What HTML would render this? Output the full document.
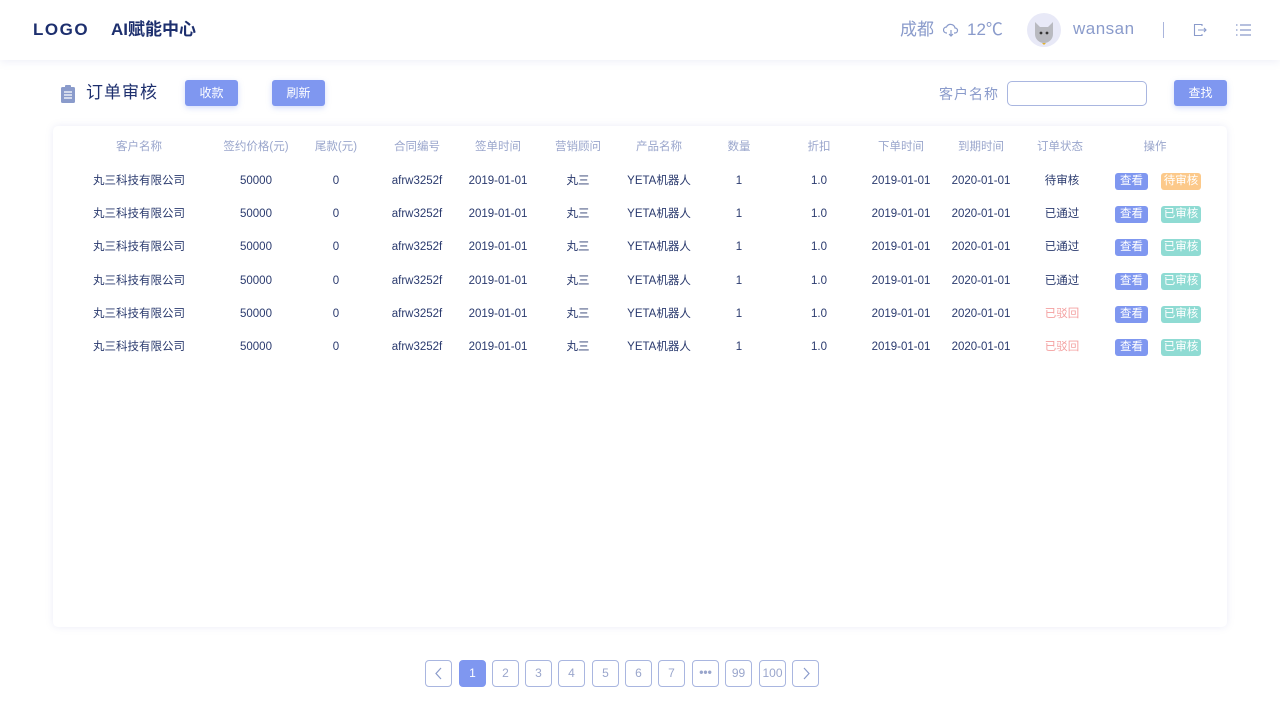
<!DOCTYPE html>
<html><head><meta charset="utf-8"><style>
*{margin:0;padding:0;box-sizing:border-box}
body{width:1280px;height:720px;background:#fff;font-family:"Liberation Sans","Noto Sans CJK SC",sans-serif;position:relative;overflow:hidden}
.hdr{position:absolute;left:0;top:0;width:1280px;height:60px;background:#fff;box-shadow:0 2px 8px rgba(120,130,200,.12)}
.a{position:absolute;white-space:nowrap}
.btn{position:absolute;background:#7f97f0;color:#fff;font-size:12px;border-radius:3px;text-align:center;line-height:26px;height:26px;width:53px;box-shadow:0 2px 6px rgba(127,151,240,.35)}
.card{position:absolute;left:53px;top:126px;width:1174px;height:501px;background:#fff;border-radius:5px;box-shadow:0 0 8px rgba(120,130,200,.15)}
.r{position:absolute;left:0;width:1280px;height:20px;font-size:11.5px;color:#2a3a6e}
.r span{position:absolute;width:120px;margin-left:-60px;text-align:center;line-height:20px}
.h{color:#9aa6cc}
.tag{position:absolute;top:2px;height:17px;line-height:17px;font-size:11.5px;color:#fff;border-radius:3px;text-align:center}
.pg{position:absolute;top:660px;width:27px;height:27px;border:1px solid #a9b6e0;border-radius:4px;color:#9aa6cc;font-size:12px;text-align:center;line-height:25px;background:#fff}
</style></head><body>
<div class="hdr"></div>
<div class="a" style="left:33px;top:20px;line-height:20px;font-size:17px;font-weight:bold;color:#1d2f6e;letter-spacing:1.5px">LOGO</div>
<div class="a" style="left:111px;top:20px;line-height:20px;font-size:17px;font-weight:bold;color:#1d2f6e">AI赋能中心</div>
<div class="a" style="left:900px;top:20px;line-height:20px;font-size:17px;color:#8a9bcb">成都</div>
<svg class="a" style="left:943px;top:23px" width="16" height="14" viewBox="0 0 16 14"><path d="M4 10H3.5a3 3 0 0 1 0-6 4.5 4.5 0 0 1 8.5 1 2.5 2.5 0 0 1 0 5H11M8 7v6M6 11l2 2 2-2" fill="none" stroke="#8a9bcb" stroke-width="1.2"/></svg>
<div class="a" style="left:967px;top:20px;line-height:20px;font-size:17px;color:#8a9bcb">12℃</div>
<div class="a" style="left:1027px;top:13px;width:34px;height:34px;border-radius:50%;background:#e8e9f7"></div>
<svg class="a" style="left:1031px;top:18px" width="26" height="28" viewBox="0 0 26 28"><path d="M4 4l5 5h8l5-5v12a9 9 0 0 1-18 0z" fill="#b9bac0"/><circle cx="10" cy="15" r="1.4" fill="#333"/><circle cx="16" cy="15" r="1.4" fill="#333"/><path d="M11 25h4l-2 2z" fill="#e0b030"/></svg>
<div class="a" style="left:1073px;top:19px;line-height:20px;font-size:17px;color:#8a9bcb;letter-spacing:.5px">wansan</div>
<div class="a" style="left:1163px;top:22px;width:1px;height:16px;background:#aab5dc"></div>
<svg class="a" style="left:1193px;top:23px" width="14" height="14" viewBox="0 0 14 14"><path d="M9 3V1.5H1.5v11H9V11M5 7h8M11 5l2 2-2 2" fill="none" stroke="#8a9bcb" stroke-width="1.1"/></svg>
<svg class="a" style="left:1236px;top:23px" width="15" height="14" viewBox="0 0 15 14"><path d="M0 2h1.5M0 7h1.5M0 12h1.5M4 2h11M4 7h11M4 12h11" stroke="#8a9bcb" stroke-width="1.2"/></svg>

<svg class="a" style="left:60px;top:85px" width="16" height="18" viewBox="0 0 16 18"><rect x="1" y="2" width="14" height="16" rx="1.5" fill="#8a9bcb"/><rect x="5" y="0" width="6" height="3" rx="1" fill="#8a9bcb"/><path d="M4 7h8M4 10h8M4 13h8" stroke="#fff" stroke-width="1.2"/></svg>
<div class="a" style="left:86px;top:83px;line-height:20px;font-size:17px;color:#1d2f6e;letter-spacing:1px">订单审核</div>
<div class="btn" style="left:185px;top:80px">收款</div>
<div class="btn" style="left:272px;top:80px">刷新</div>
<div class="a" style="left:939px;top:84px;line-height:20px;font-size:14px;color:#8a9bcb;letter-spacing:1px">客户名称</div>
<div class="a" style="left:1007px;top:81px;width:140px;height:25px;border:1px solid #a9b6e0;border-radius:5px;background:#fff"></div>
<div class="btn" style="left:1174px;top:80px">查找</div>

<div class="card"></div>
<div class="r h" style="top:137px"><span style="left:139px">客户名称</span><span style="left:256px">签约价格(元)</span><span style="left:336px">尾款(元)</span><span style="left:417px">合同编号</span><span style="left:498px">签单时间</span><span style="left:578px">营销顾问</span><span style="left:659px">产品名称</span><span style="left:739px">数量</span><span style="left:819px">折扣</span><span style="left:901px">下单时间</span><span style="left:981px">到期时间</span><span style="left:1060px">订单状态</span><span style="left:1155px">操作</span></div>

<div class="r" style="top:171px"><span style="left:139px">丸三科技有限公司</span><span style="left:256px">50000</span><span style="left:336px">0</span><span style="left:417px">afrw3252f</span><span style="left:498px">2019-01-01</span><span style="left:578px">丸三</span><span style="left:659px">YETA机器人</span><span style="left:739px">1</span><span style="left:819px">1.0</span><span style="left:901px">2019-01-01</span><span style="left:981px">2020-01-01</span><span style="left:1062px">待审核</span><div class="tag" style="left:1115px;width:33px;background:#7f97f0">查看</div><div class="tag" style="left:1161px;width:40px;background:#fcc98a">待审核</div></div>
<div class="r" style="top:204px"><span style="left:139px">丸三科技有限公司</span><span style="left:256px">50000</span><span style="left:336px">0</span><span style="left:417px">afrw3252f</span><span style="left:498px">2019-01-01</span><span style="left:578px">丸三</span><span style="left:659px">YETA机器人</span><span style="left:739px">1</span><span style="left:819px">1.0</span><span style="left:901px">2019-01-01</span><span style="left:981px">2020-01-01</span><span style="left:1062px">已通过</span><div class="tag" style="left:1115px;width:33px;background:#7f97f0">查看</div><div class="tag" style="left:1161px;width:40px;background:#8fdbd3">已审核</div></div>
<div class="r" style="top:237px"><span style="left:139px">丸三科技有限公司</span><span style="left:256px">50000</span><span style="left:336px">0</span><span style="left:417px">afrw3252f</span><span style="left:498px">2019-01-01</span><span style="left:578px">丸三</span><span style="left:659px">YETA机器人</span><span style="left:739px">1</span><span style="left:819px">1.0</span><span style="left:901px">2019-01-01</span><span style="left:981px">2020-01-01</span><span style="left:1062px">已通过</span><div class="tag" style="left:1115px;width:33px;background:#7f97f0">查看</div><div class="tag" style="left:1161px;width:40px;background:#8fdbd3">已审核</div></div>
<div class="r" style="top:271px"><span style="left:139px">丸三科技有限公司</span><span style="left:256px">50000</span><span style="left:336px">0</span><span style="left:417px">afrw3252f</span><span style="left:498px">2019-01-01</span><span style="left:578px">丸三</span><span style="left:659px">YETA机器人</span><span style="left:739px">1</span><span style="left:819px">1.0</span><span style="left:901px">2019-01-01</span><span style="left:981px">2020-01-01</span><span style="left:1062px">已通过</span><div class="tag" style="left:1115px;width:33px;background:#7f97f0">查看</div><div class="tag" style="left:1161px;width:40px;background:#8fdbd3">已审核</div></div>
<div class="r" style="top:304px"><span style="left:139px">丸三科技有限公司</span><span style="left:256px">50000</span><span style="left:336px">0</span><span style="left:417px">afrw3252f</span><span style="left:498px">2019-01-01</span><span style="left:578px">丸三</span><span style="left:659px">YETA机器人</span><span style="left:739px">1</span><span style="left:819px">1.0</span><span style="left:901px">2019-01-01</span><span style="left:981px">2020-01-01</span><span style="left:1062px;color:#f4a0a0">已驳回</span><div class="tag" style="left:1115px;width:33px;background:#7f97f0">查看</div><div class="tag" style="left:1161px;width:40px;background:#8fdbd3">已审核</div></div>
<div class="r" style="top:337px"><span style="left:139px">丸三科技有限公司</span><span style="left:256px">50000</span><span style="left:336px">0</span><span style="left:417px">afrw3252f</span><span style="left:498px">2019-01-01</span><span style="left:578px">丸三</span><span style="left:659px">YETA机器人</span><span style="left:739px">1</span><span style="left:819px">1.0</span><span style="left:901px">2019-01-01</span><span style="left:981px">2020-01-01</span><span style="left:1062px;color:#f4a0a0">已驳回</span><div class="tag" style="left:1115px;width:33px;background:#7f97f0">查看</div><div class="tag" style="left:1161px;width:40px;background:#8fdbd3">已审核</div></div>

<div class="pg" style="left:425px"><svg width="10" height="25" viewBox="0 0 10 25"><path d="M7 7l-5 5.5 5 5.5" fill="none" stroke="#8a9bcb" stroke-width="1.2"/></svg></div>
<div class="pg" style="left:459px;background:#7f97f0;border-color:#7f97f0;color:#fff">1</div>
<div class="pg" style="left:492px">2</div>
<div class="pg" style="left:525px">3</div>
<div class="pg" style="left:558px">4</div>
<div class="pg" style="left:592px">5</div>
<div class="pg" style="left:625px">6</div>
<div class="pg" style="left:658px">7</div>
<div class="pg" style="left:692px;font-weight:bold;line-height:22px">•••</div>
<div class="pg" style="left:725px">99</div>
<div class="pg" style="left:759px">100</div>
<div class="pg" style="left:792px"><svg width="10" height="25" viewBox="0 0 10 25"><path d="M3 7l5 5.5-5 5.5" fill="none" stroke="#8a9bcb" stroke-width="1.2"/></svg></div>
</body></html>
